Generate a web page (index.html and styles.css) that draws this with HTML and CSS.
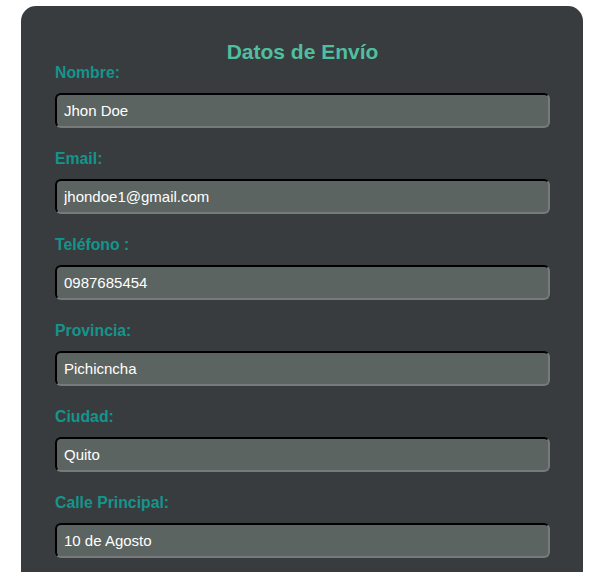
FILE: index.html
```html
<!DOCTYPE html>
<html lang="es">
<head>
<meta charset="utf-8">
<link rel="stylesheet" href="styles.css">
</head>
<body>
<form class="card">
  <h2 class="title">Datos de Envío</h2>
  <label class="label">Nombre:</label>
  <input class="field" type="text" value="Jhon Doe">
  <label class="label">Email:</label>
  <input class="field" type="text" value="jhondoe1@gmail.com">
  <label class="label">Teléfono :</label>
  <input class="field" type="text" value="0987685454">
  <label class="label">Provincia:</label>
  <input class="field" type="text" value="Pichicncha">
  <label class="label">Ciudad:</label>
  <input class="field" type="text" value="Quito">
  <label class="label">Calle Principal:</label>
  <input class="field" type="text" value="10 de Agosto">
</form>
</body>
</html>
```
FILE: styles.css
```css
html, body {
  margin: 0;
  padding: 0;
  background: #ffffff;
  font-family: "Liberation Sans", Arial, sans-serif;
}
.card {
  display: block;
  box-sizing: border-box;
  width: 562px;
  margin: 6px 0 0 21px;
  padding: 34px 33px 40px 34px;
  background: #393c3f;
  border-radius: 15px;
  min-height: 600px;
}
.title {
  margin: 0;
  text-align: center;
  font-size: 21px;
  line-height: 24px;
  font-weight: bold;
  color: #4fbf9f;
}
.label {
  display: block;
  font-size: 15.8px;
  line-height: 18px;
  font-weight: bold;
  color: #14958c;
  margin-bottom: 11px;
}
.field {
  display: block;
  box-sizing: border-box;
  width: 100%;
  height: 35px;
  margin: 0 0 22px;
  padding: 0 7px;
  border: 2px inset #767676;
  border-top-color: #1f2123;
  border-left-color: #1f2123;
  border-right-color: #767a7a;
  border-bottom-color: #767a7a;
  border-radius: 6px;
  background: #5c6461;
  color: #ffffff;
  font-family: "Liberation Sans", Arial, sans-serif;
  font-size: 15px;
  outline: none;
}
```
